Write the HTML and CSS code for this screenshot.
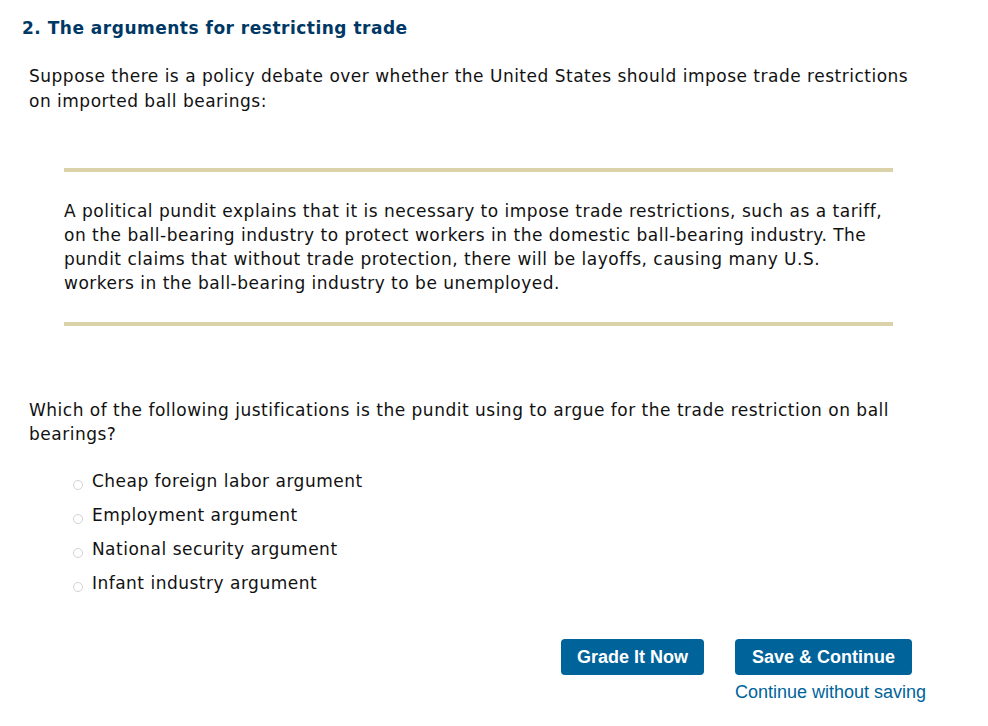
FILE: index.html
```html
<!DOCTYPE html>
<html lang="en">
<head>
    <meta charset="UTF-8">
    <title>The arguments for restricting trade</title>
    <link rel="stylesheet" href="styles.css">
</head>
<body>
<div class="question">
    <h2 class="question-title">2. The arguments for restricting trade</h2>
    <p class="intro">Suppose there is a policy debate over whether the United States should impose trade restrictions on imported ball bearings:</p>

    <div class="passage">
        <p>A political pundit explains that it is necessary to impose trade restrictions, such as a tariff, on the ball-bearing industry to protect workers in the domestic ball-bearing industry. The pundit claims that without trade protection, there will be layoffs, causing many U.S. workers in the ball-bearing industry to be unemployed.</p>
    </div>

    <p class="prompt">Which of the following justifications is the pundit using to argue for the trade restriction on ball bearings?</p>

    <ul class="choices">
        <li><label><input type="radio" name="answer"> Cheap foreign labor argument</label></li>
        <li><label><input type="radio" name="answer"> Employment argument</label></li>
        <li><label><input type="radio" name="answer"> National security argument</label></li>
        <li><label><input type="radio" name="answer"> Infant industry argument</label></li>
    </ul>

    <div class="actions">
        <button class="btn" type="button">Grade It Now</button>
        <div class="save-group">
            <button class="btn btn-save" type="button">Save &amp; Continue</button>
            <a class="skip-link" href="#">Continue without saving</a>
        </div>
    </div>
</div>
</body>
</html>
```

FILE: styles.css
```css
body {
    margin: 0;
    background: #fff;
    font-family: "DejaVu Sans", Verdana, sans-serif;
    color: #111;
}
.question {
    padding: 18px 0 0 22px;
}
.question-title {
    margin: 0;
    font-size: 17px;
    line-height: 20px;
    letter-spacing: 0.5px;
    font-weight: bold;
    color: #003865;
}
.intro, .prompt {
    margin: 0;
    padding-left: 7px;
    width: 893px;
    font-size: 17px;
    letter-spacing: 0.5px;
}
.intro {
    margin-top: 26px;
    line-height: 25px;
}
.passage {
    margin: 54px 0 0 42px;
    width: 829px;
    border-top: 4px solid #dcd2a9;
    border-bottom: 4px solid #dcd2a9;
    padding: 27px 0;
}
.passage p {
    margin: 0;
    font-size: 17px;
    letter-spacing: 0.5px;
    line-height: 24px;
}
.prompt {
    margin-top: 72px;
    line-height: 24px;
}
.choices {
    list-style: none;
    margin: 18px 0 0 51px;
    padding: 0;
}
.choices li {
    height: 34px;
    line-height: 34px;
    font-size: 17px;
    letter-spacing: 0.5px;
}
.choices input {
    appearance: none;
    width: 10px;
    height: 10px;
    margin: 0 3px 0 0;
    border: 1px solid #d2d2d2;
    border-radius: 50%;
    background: #fff;
    vertical-align: -3px;
}
.actions {
    display: flex;
    gap: 31px;
    margin: 39px 0 0 539px;
}
.btn {
    flex-shrink: 0;
    white-space: nowrap;
    background-color: #00639a;
    color: #fff;
    border: none;
    border-radius: 4px;
    height: 36px;
    padding: 0 16px;
    font-family: "Liberation Sans", Arial, sans-serif;
    font-size: 18px;
    font-weight: bold;
    cursor: pointer;
}
.btn-save {
    padding: 0 17px;
}
.save-group {
    display: flex;
    flex-direction: column;
    align-items: flex-start;
}
.skip-link {
    margin-top: 7px;
    line-height: 20px;
    white-space: nowrap;
    color: #00639a;
    text-decoration: none;
    font-family: "Liberation Sans", Arial, sans-serif;
    font-size: 18px;
}
```
